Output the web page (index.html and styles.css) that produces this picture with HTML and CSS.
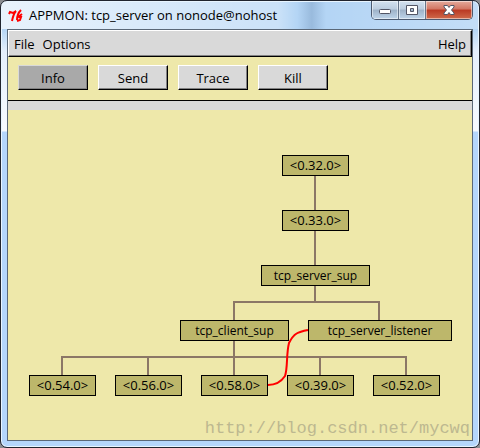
FILE: index.html
```html
<!DOCTYPE html>
<html lang="en">
<head>
<meta charset="utf-8">
<title>APPMON: tcp_server on nonode@nohost</title>
<link rel="stylesheet" href="styles.css">
</head>
<body>
<div class="window">
  <header class="titlebar">
    <svg class="app-icon" width="16" height="14" viewBox="0 0 16 14" aria-hidden="true">
      <path d="M1 5L2 3L5 4L8 2C6 4 5 7 4 12"/>
      <path d="M13 1C10 4 9 7 9 11M9 9L14 5M11 8L13 8L12 11L9 12"/>
    </svg>
    <h1 class="title">APPMON: tcp_server on nonode@nohost</h1>
    <div class="controls">
      <button class="control" type="button" aria-label="Minimize">
        <svg width="14" height="12" viewBox="0 0 14 12"><rect x="1.500" y="5.500" width="11" height="4" rx="1" fill="#fff" stroke="#535666"/></svg>
      </button>
      <button class="control" type="button" aria-label="Maximize">
        <svg width="14" height="12" viewBox="0 0 14 12"><path d="M1.500 1.500h11v9h-11z M5.500 4.500v3h3v-3z" fill="#fff" fill-rule="evenodd" stroke="#535666"/></svg>
      </button>
      <button class="control close" type="button" aria-label="Close">
        <svg width="14" height="12" viewBox="0 0 14 12"><path d="M2 1.500h3.500L7 3.500l1.500-2H12V3L9.500 6 12 9v1.500H8.500L7 8.500l-1.500 2H2V9l2.500-3L2 3z" fill="#fff" stroke="#535666"/></svg>
      </button>
    </div>
  </header>
  <main class="content">
    <nav class="menubar">
      <button class="menu" type="button">File</button>
      <button class="menu" type="button">Options</button>
      <button class="menu help" type="button">Help</button>
    </nav>
    <div class="toolbar">
      <button class="tool active" type="button">Info</button>
      <button class="tool" type="button">Send</button>
      <button class="tool" type="button">Trace</button>
      <button class="tool" type="button">Kill</button>
    </div>
    <div class="divider"></div>
    <section class="canvas">
      <svg class="edges" width="464" height="330" viewBox="0 0 464 330" aria-hidden="true">
        <path class="tree" d="M307 66V100 M307 121V155 M307 176V192 M226 210V192H371V210 M226 231V265 M54 265V247H398V265 M140 247V265 M312 247V265"/>
        <path class="link" d="M260 275C268 275 273 272 277 266C280 257 278 245 281 233C286 223 290 222 300 220"/>
      </svg>
      <div class="node p32">&lt;0.32.0&gt;</div>
      <div class="node p33">&lt;0.33.0&gt;</div>
      <div class="node named server-sup">tcp_server_sup</div>
      <div class="node named client-sup">tcp_client_sup</div>
      <div class="node named listener">tcp_server_listener</div>
      <div class="node p54">&lt;0.54.0&gt;</div>
      <div class="node p56">&lt;0.56.0&gt;</div>
      <div class="node p58">&lt;0.58.0&gt;</div>
      <div class="node p39">&lt;0.39.0&gt;</div>
      <div class="node p52">&lt;0.52.0&gt;</div>
      <div class="watermark">http://blog.csdn.net/mycwq</div>
    </section>
  </main>
</div>
</body>
</html>
```
FILE: styles.css
```css
* {
  box-sizing: border-box;
}

body {
  margin: 0;
  background: #8a8c90;
  color: #000;
  font: 13px/18px "Open Sans", "Noto Sans", sans-serif;
}

button {
  font: inherit;
  color: inherit;
}

.window {
  display: flex;
  flex-direction: column;
  min-height: 100vh;
  padding: 0 6px 6px;
  border: 1px solid #20242e;
  border-radius: 7px;
  background:
    linear-gradient(90deg, rgba(255, 255, 255, 0.7), rgba(255, 255, 255, 0.3) 58%, rgba(255, 255, 255, 0) 62%, rgba(90, 125, 165, 0.3) 65%, rgba(255, 255, 255, 0) 68%, rgba(255, 255, 255, 0.2)) top / 100% 28px no-repeat,
    linear-gradient(#b4d5f5 28px, #e4effc 50px, #f6faff 130px, #b4d6fb 131px);
  box-shadow: inset 0 0 0 1px #e8f5ff;
}

.titlebar {
  display: flex;
  height: 28px;
}

.app-icon {
  margin: 8px 5px 0 1px;
  fill: none;
  stroke: #f00;
  stroke-width: 2;
}

.title {
  flex: 1;
  margin: 0;
  padding-top: 5px;
  font-size: 13px;
  font-weight: 400;
  white-space: nowrap;
}

.controls {
  display: flex;
  height: 19px;
  border: 1px solid #4c5a70;
  border-top: 0;
  border-radius: 0 0 5px 5px;
  overflow: hidden;
}

.control {
  display: flex;
  align-items: center;
  justify-content: center;
  width: 27px;
  padding: 0;
  border: 0;
  border-right: 1px solid #66758a;
  background: linear-gradient(#d4e2f0, #bccddf 45%, #9eb2c8 50%, #bfd5ea);
  box-shadow: inset 0 0 0 1px rgba(255, 255, 255, 0.5);
}

.close {
  width: 46px;
  border-right: 0;
  background: linear-gradient(#e5aa9c, #d27562 45%, #ba3923 50%, #cf6a4b);
}

.content {
  flex: 1;
  display: flex;
  flex-direction: column;
  border: 1px solid #5a6878;
  background: #eee8aa;
}

.menubar {
  display: flex;
  gap: 8px;
  height: 27px;
  padding: 0 5px;
  border: 1px solid #fff;
  border-right-color: #000;
  border-bottom-color: #000;
  background: #d9d9d9;
  box-shadow: inset -1px -1px #828282;
}

.menu {
  padding: 0;
  border: 0;
  background: none;
}

.help {
  margin-left: auto;
}

.toolbar {
  display: flex;
  gap: 10px;
  padding: 8px 10px 10px;
  border-bottom: 1px solid #000;
}

.tool {
  width: 70px;
  height: 25px;
  padding: 0;
  border: 1px solid #fff;
  border-right-color: #000;
  border-bottom-color: #000;
  background: #d9d9d9;
  box-shadow: inset -1px -1px #828282;
}

.active {
  border-top-color: #d9d9d9;
  border-left-color: #d9d9d9;
  background: #a9a9a9;
}

.divider {
  height: 9px;
  background: #d9d9d9;
}

.canvas {
  position: relative;
  flex: 1;
  min-height: 330px;
  overflow: hidden;
}

.edges {
  position: absolute;
  top: 0;
  left: 0;
  fill: none;
  stroke-width: 2;
}

.tree {
  stroke: #8b7766;
}

.link {
  stroke: #f00;
}

.node {
  position: absolute;
  width: 67px;
  height: 21px;
  border: 1px solid #000;
  background: #bdb76b;
  line-height: 19px;
  text-align: center;
  white-space: nowrap;
}

.named {
  width: 109px;
  font-size: 12px;
}

.p32 { left: 274px; top: 45px; }
.p33 { left: 274px; top: 100px; }
.server-sup { left: 253px; top: 155px; }
.client-sup { left: 172px; top: 210px; }
.listener { left: 300px; top: 210px; width: 144px; }
.p54 { left: 21px; top: 265px; }
.p56 { left: 107px; top: 265px; }
.p58 { left: 193px; top: 265px; }
.p39 { left: 279px; top: 265px; }
.p52 { left: 365px; top: 265px; }

.watermark {
  position: absolute;
  right: 2px;
  bottom: 1px;
  color: #bdb890;
  font: 17px/20px "Liberation Mono", monospace;
}
```
